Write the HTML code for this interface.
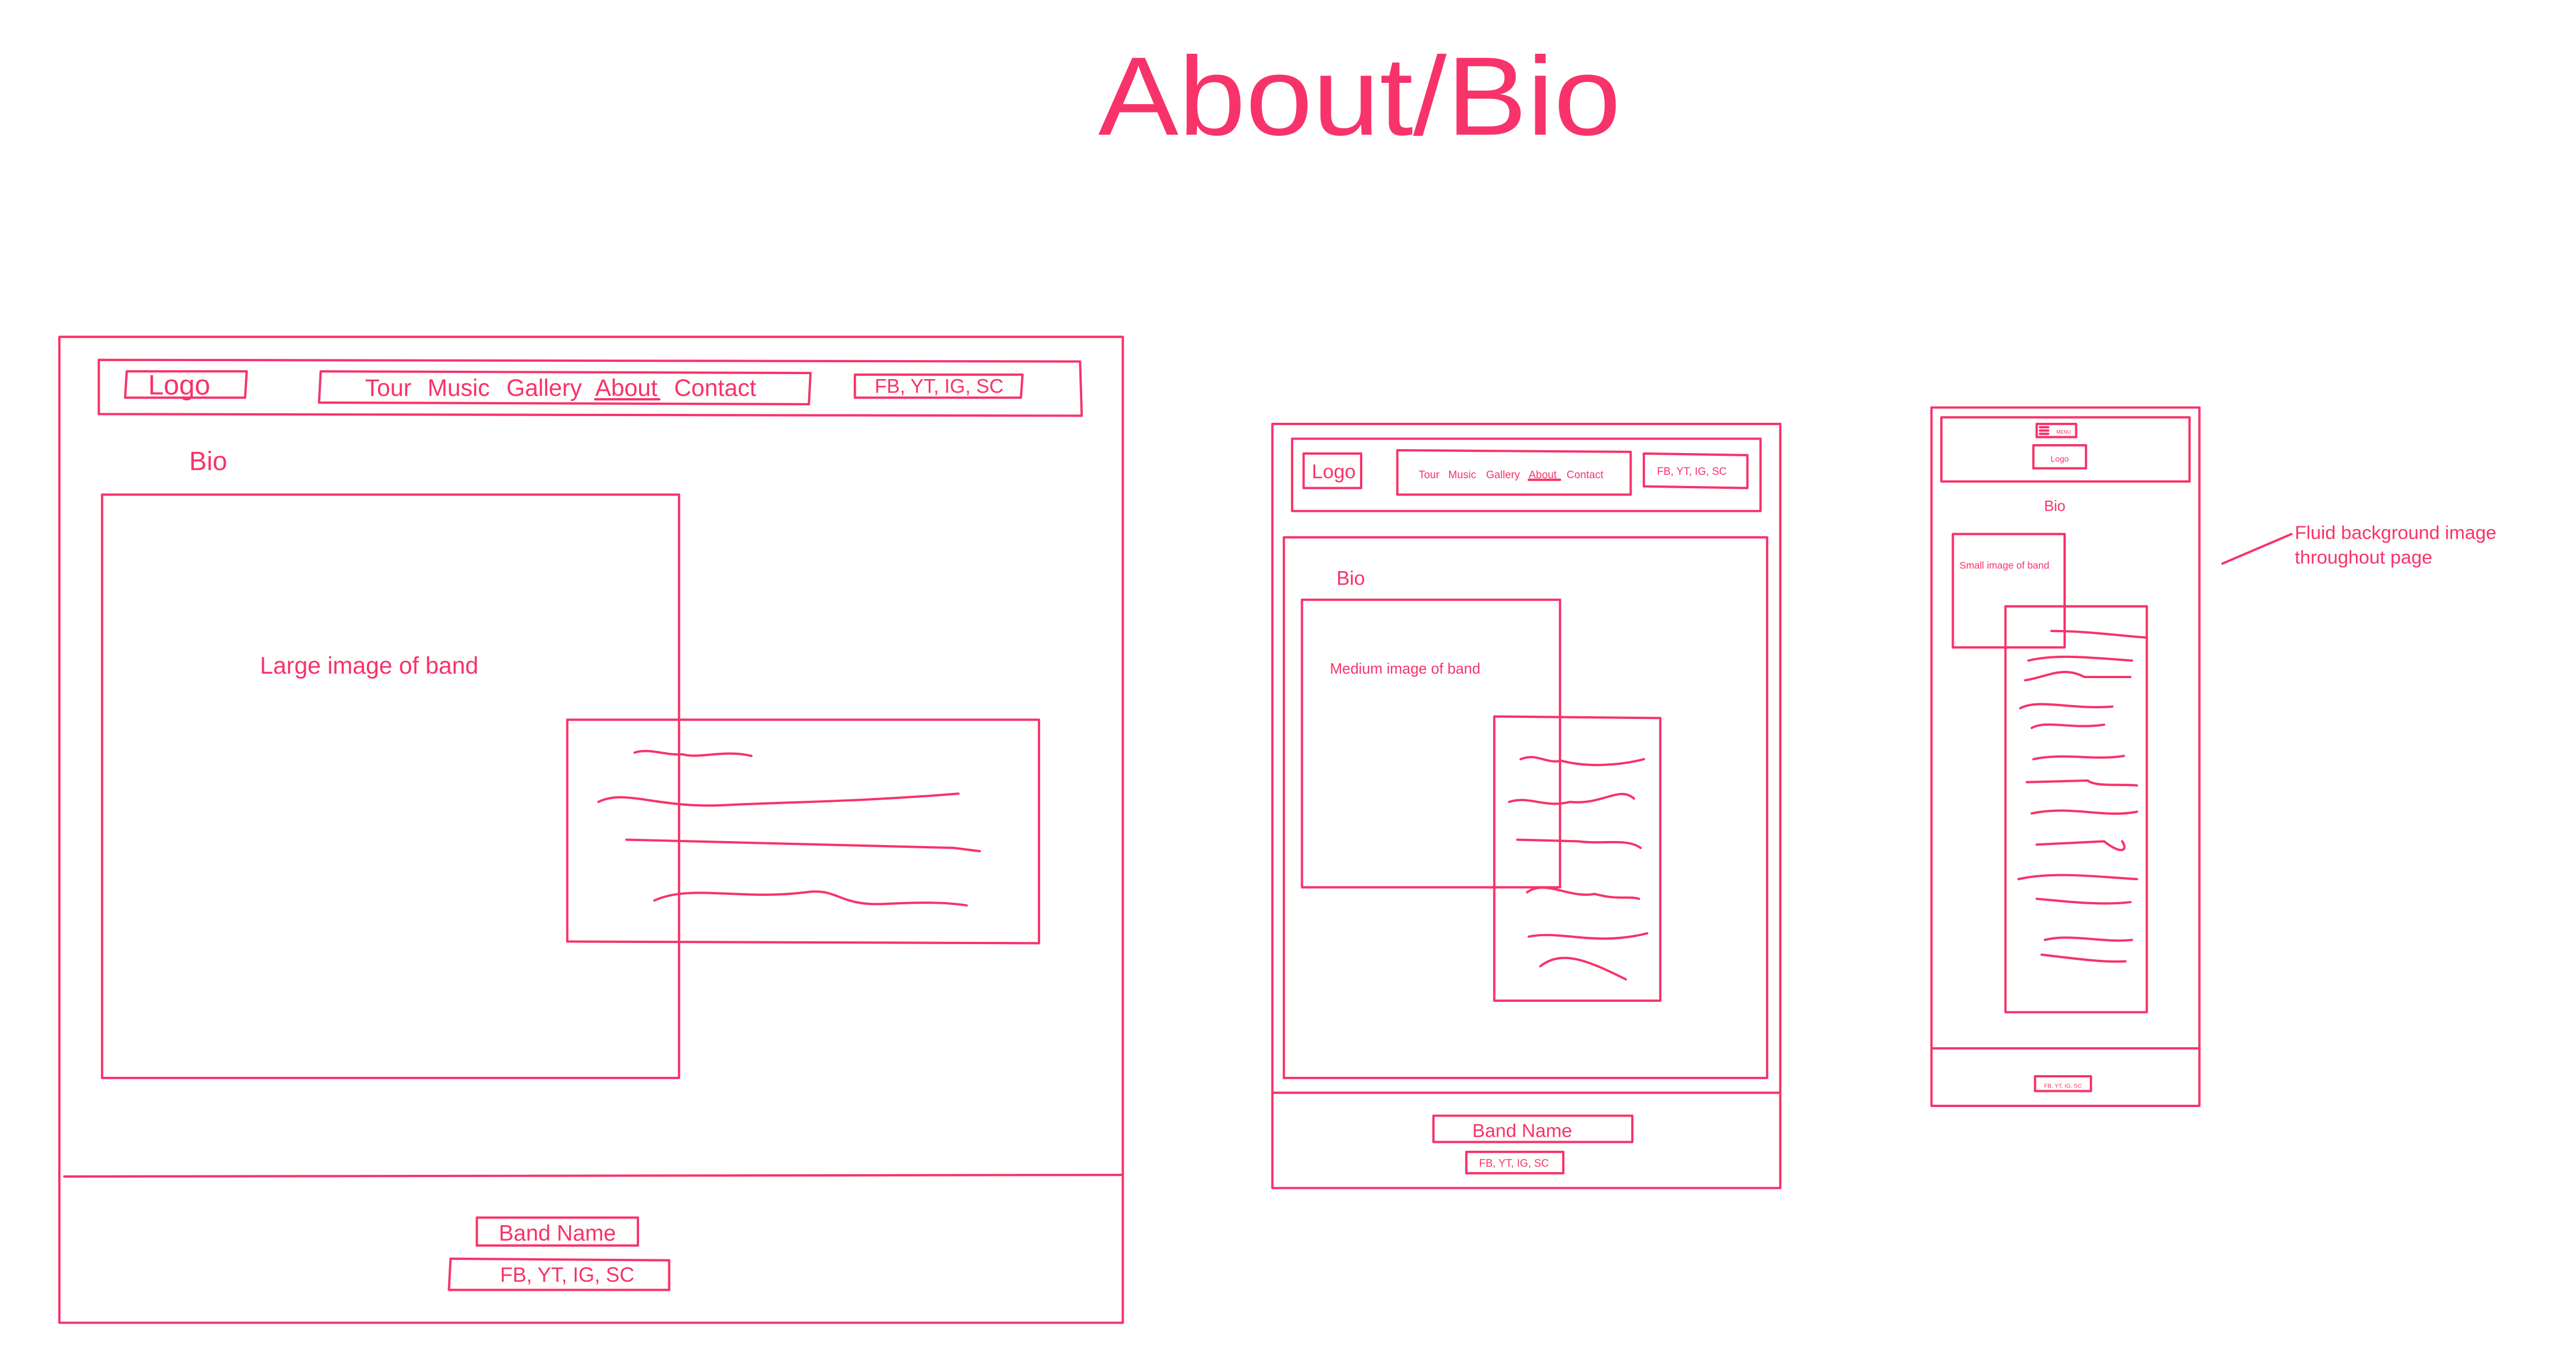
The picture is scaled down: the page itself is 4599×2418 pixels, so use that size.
<!DOCTYPE html>
<html><head><meta charset="utf-8"><style>
html,body{margin:0;padding:0;background:#fff;width:4599px;height:2418px;overflow:hidden}
svg{display:block}
text{font-family:"Liberation Sans",sans-serif;fill:#f7336a}
</style></head><body>
<svg width="4599" height="2418" viewBox="0 0 1567 824" xmlns="http://www.w3.org/2000/svg">
<g fill="none" stroke="#f7336a" stroke-width="1.4" stroke-linecap="round" stroke-linejoin="round">
<!-- Desktop -->
<path d="M36 205 L683 205 L683 805 L36 805 Z"/>
<path d="M60 219 L657 220 L658 253 L60 252 Z"/>
<path d="M77 226 L150 226 L149 242 L76 242 Z"/>
<path d="M195 226 L493 227 L492 246 L194 245 Z"/>
<path d="M520 228 L622 228 L621 242 L520 242 Z"/>
<path d="M362 243 L401 243"/>
<path d="M62 301 L413 301 L413 656 L62 656 Z"/>
<path d="M345 438 L632 438 L632 574 L345 573 Z"/>
<path d="M386 458 C395 455 405 460 415 459 C425 462 440 456 457 460"/>
<path d="M364 488 C380 480 400 492 440 490 C480 488 520 488 583 483"/>
<path d="M381 511 L580 516 L596 518"/>
<path d="M398 548 C420 538 450 548 490 543 C510 540 510 552 540 550 C560 549 575 549 588 551"/>
<path d="M39 716 L682 715"/>
<path d="M290 741 L388 741 L388 758 L290 758 Z"/>
<path d="M274 766 L407 767 L407 785 L273 785 Z"/>
<!-- Tablet -->
<path d="M774 258 L1083 258 L1083 723 L774 723 Z"/>
<path d="M786 267 L1071 267 L1071 311 L786 311 Z"/>
<path d="M793 276 L828 276 L828 297 L793 297 Z"/>
<path d="M850 274 L992 275 L992 301 L850 301 Z"/>
<path d="M1000 276 L1063 277 L1063 297 L1000 296 Z"/>
<path d="M930 292 L949 292"/>
<path d="M781 327 L1075 327 L1075 656 L781 656 Z"/>
<path d="M792 365 L949 365 L949 540 L792 540 Z"/>
<path d="M909 436 L1010 437 L1010 609 L909 609 Z"/>
<path d="M925 462 C935 458 940 465 950 463 C965 467 985 466 1000 462"/>
<path d="M918 488 C930 484 940 492 955 488 C975 490 985 478 994 486"/>
<path d="M923 511 L960 512 C975 514 990 510 998 516"/>
<path d="M929 543 C940 535 955 547 970 544 C985 548 990 545 997 547"/>
<path d="M930 570 C950 566 970 576 1002 568"/>
<path d="M937 588 C950 578 965 584 989 596"/>
<path d="M775 665 L1082 665"/>
<path d="M872 679 L993 679 L993 695 L872 695 Z"/>
<path d="M892 701 L951 701 L951 714 L892 714 Z"/>
<!-- Mobile -->
<path d="M1175 248 L1338 248 L1338 673 L1175 673 Z"/>
<path d="M1181 254 L1332 254 L1332 293 L1181 293 Z"/>
<path d="M1239 258 L1263 258 L1263 266 L1239 266 Z"/>
<path d="M1241 260 L1246 260 M1241 262 L1246 262 M1241 264 L1246 264"/>
<path d="M1237 271 L1269 271 L1269 285 L1237 285 Z"/>
<path d="M1188 325 L1256 325 L1256 394 L1188 394 Z"/>
<path d="M1220 369 L1306 369 L1306 616 L1220 616 Z"/>
<path d="M1248 384 C1270 384 1290 387 1306 388"/>
<path d="M1234 402 C1250 398 1270 400 1297 402"/>
<path d="M1232 414 C1245 412 1255 405 1268 412 L1296 412"/>
<path d="M1229 431 C1240 425 1260 432 1285 430"/>
<path d="M1236 443 C1245 438 1260 444 1280 441"/>
<path d="M1237 462 C1255 458 1275 463 1292 460"/>
<path d="M1233 476 L1270 475 C1275 479 1290 477 1300 478"/>
<path d="M1236 495 C1260 490 1280 498 1300 494"/>
<path d="M1239 514 L1280 512 C1290 520 1295 518 1291 512"/>
<path d="M1228 535 C1250 530 1280 534 1300 535"/>
<path d="M1239 547 C1260 549 1280 551 1296 549"/>
<path d="M1244 572 C1260 568 1280 574 1297 572"/>
<path d="M1242 581 C1260 583 1280 586 1293 585"/>
<path d="M1175 638 L1338 638"/>
<path d="M1238 655 L1272 655 L1272 664 L1238 664 Z"/>
<path d="M1352 343 L1394 325"/>
</g>
<text x="668" y="82" font-size="68" textLength="318" lengthAdjust="spacingAndGlyphs">About/Bio</text>
<text x="90" y="240" font-size="17">Logo</text>
<g font-size="14.5"><text x="222" y="241">Tour</text><text x="260" y="241">Music</text><text x="308" y="241">Gallery</text><text x="362" y="241">About</text><text x="410" y="241">Contact</text></g>
<text x="532" y="239" font-size="12">FB, YT, IG, SC</text>
<text x="115" y="286" font-size="16">Bio</text>
<text x="158" y="410" font-size="14.5">Large image of band</text>
<text x="339" y="755" font-size="13.5" text-anchor="middle">Band Name</text>
<text x="345" y="780" font-size="12.5" text-anchor="middle">FB, YT, IG, SC</text>
<text x="798" y="291" font-size="12">Logo</text>
<g font-size="6.5"><text x="863" y="291">Tour</text><text x="881" y="291">Music</text><text x="904" y="291">Gallery</text><text x="930" y="291">About</text><text x="953" y="291">Contact</text></g>
<text x="1008" y="289" font-size="6.5">FB, YT, IG, SC</text>
<text x="813" y="356" font-size="12">Bio</text>
<text x="809" y="410" font-size="9">Medium image of band</text>
<text x="926" y="692" font-size="11.5" text-anchor="middle">Band Name</text>
<text x="921" y="710" font-size="6.5" text-anchor="middle">FB, YT, IG, SC</text>
<text x="1251" y="264" font-size="3">MENU</text>
<text x="1253" y="281" font-size="5" text-anchor="middle">Logo</text>
<text x="1250" y="311" font-size="9" text-anchor="middle">Bio</text>
<text x="1192" y="346" font-size="6">Small image of band</text>
<text x="1255" y="662" font-size="3.5" text-anchor="middle">FB, YT, IG, SC</text>
<text x="1396" y="328" font-size="11.5">Fluid background image</text>
<text x="1396" y="343" font-size="11.5">throughout page</text>
</svg>
</body></html>
